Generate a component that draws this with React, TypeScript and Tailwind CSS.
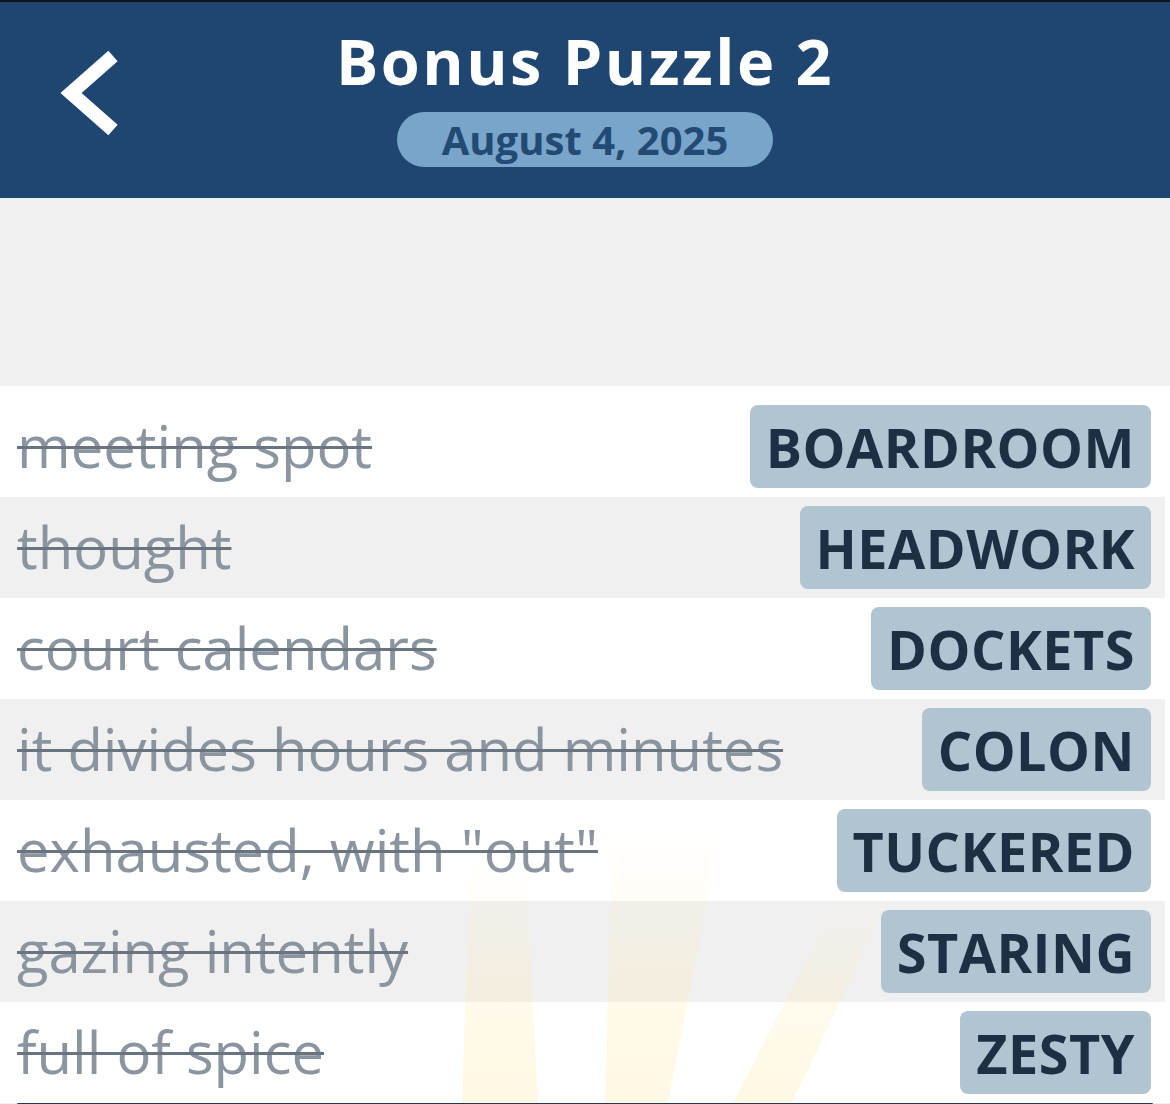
import React from "react";

const rows: { clue: string; answer: string }[] = [
  { clue: "meeting spot", answer: "BOARDROOM" },
  { clue: "thought", answer: "HEADWORK" },
  { clue: "court calendars", answer: "DOCKETS" },
  { clue: "it divides hours and minutes", answer: "COLON" },
  { clue: 'exhausted, with "out"', answer: "TUCKERED" },
  { clue: "gazing intently", answer: "STARING" },
  { clue: "full of spice", answer: "ZESTY" },
];

function Rays() {
  return (
    <svg
      className="pointer-events-none absolute left-0 top-0 h-full w-full"
      viewBox="0 0 1170 707"
      preserveAspectRatio="none"
    >
      <defs>
        <linearGradient id="rayg" x1="0" y1="1" x2="0" y2="0">
          <stop offset="0" stopColor="#ffe9a8" stopOpacity="0.32" />
          <stop offset="0.55" stopColor="#ffe9a8" stopOpacity="0.2" />
          <stop offset="1" stopColor="#ffeeb8" stopOpacity="0" />
        </linearGradient>
      </defs>
      <polygon points="462,707 538,707 525,460 470,460" fill="url(#rayg)" />
      <polygon points="605,707 668,707 720,440 612,440" fill="url(#rayg)" />
      <polygon points="733,707 792,707 890,500 840,500" fill="url(#rayg)" />
    </svg>
  );
}

export default function App() {
  return (
    <div
      className="relative flex h-[1104px] w-[1170px] flex-col overflow-hidden bg-[#f0f0f0]"
      style={{ fontFamily: "'Open Sans', 'Noto Sans', sans-serif" }}
    >
      <div className="h-[2px] shrink-0 bg-[#111418]" />
      <header className="grid h-[196px] shrink-0 grid-cols-[1fr_auto_1fr] bg-[#1f4670]">
        <div className="flex items-start pl-[50px] pt-[42px]">
          <svg width="80" height="100" viewBox="50 44 80 100">
            <polyline
              points="113,56 71,93 113,130"
              fill="none"
              stroke="#ffffff"
              strokeWidth="14"
              strokeLinejoin="miter"
              strokeLinecap="butt"
            />
          </svg>
        </div>
        <div className="flex flex-col items-center pt-[19px]">
          <h1 className="text-[63px] font-bold leading-[79px] tracking-[2.5px] text-white">Bonus Puzzle 2</h1>
          <div className="mt-[12px] flex h-[55px] w-[376px] items-center justify-center rounded-full bg-[#79a5cb]">
            <span className="text-[40px] font-bold leading-none text-[#224a73]">August 4, 2025</span>
          </div>
        </div>
        <div />
      </header>
      <div className="h-[188px] shrink-0" />
      <div className="relative flex shrink-0 flex-col bg-white pr-[5px] pt-[10px]">
        {rows.map((r, i) => (
          <div
            key={r.answer}
            className={
              "flex h-[101px] shrink-0 items-center justify-between pl-[17px] pr-[14px] " +
              (i % 2 === 1 ? "bg-[#f0f0f0]" : "bg-transparent")
            }
          >
            <span className="pb-[2px] text-[58px] leading-none text-[#8b95a0] line-through decoration-[#6a7480] decoration-[3px]">
              {r.clue}
            </span>
            <span className="flex h-[83px] items-center rounded-[8px] bg-[#b1c4d2] px-[16px] text-[54px] font-bold leading-none tracking-[0.5px] text-[#1d3043]">
              {r.answer}
            </span>
          </div>
        ))}
        <div className="absolute bottom-0 left-0 right-0 h-[707px]">
          <Rays />
        </div>
      </div>
      <div className="mx-[16px] h-[3px] shrink-0 rounded-t-[3px] bg-[#1f3a55]" />
    </div>
  );
}
